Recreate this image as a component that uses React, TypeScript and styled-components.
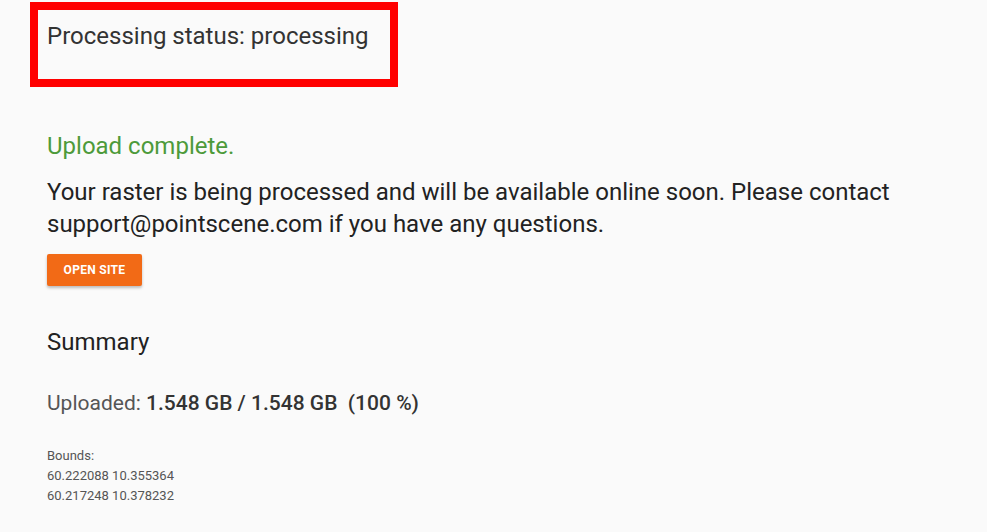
import React from "react";
import styled, { createGlobalStyle } from "styled-components";

const Global = createGlobalStyle`
  html, body { margin: 0; padding: 0; background: #fafafa; }
  body { font-family: Roboto, "Noto Sans", sans-serif; }
`;

const Page = styled.div`
  width: 987px;
  height: 532px;
  background: #fafafa;
  padding: 2px 0 0 30px;
  box-sizing: border-box;
  overflow: hidden;
`;

const StatusBox = styled.div`
  width: 368px;
  height: 85px;
  box-sizing: border-box;
  border: 8px solid #ff0000;
  padding: 11px 0 0 9px;
`;

const StatusText = styled.div`
  font-size: 24px;
  line-height: 30px;
  color: #333;
`;

const Content = styled.div`
  padding: 44px 0 0 17px;
`;

const Success = styled.div`
  font-size: 24px;
  line-height: 30px;
  color: #4d9a3a;
`;

const Message = styled.p`
  margin: 15px 0 0;
  font-size: 24px;
  line-height: 32px;
  color: #222;
`;

const Button = styled.button`
  display: block;
  margin-top: 14px;
  width: 95px;
  height: 32px;
  padding: 0;
  border: none;
  border-radius: 2px;
  background: #f26a16;
  color: #fff;
  font-family: Roboto, sans-serif;
  font-weight: 700;
  font-size: 12px;
  letter-spacing: 0.3px;
  text-transform: uppercase;
  box-shadow: 0 2px 3px rgba(0, 0, 0, 0.25);
  cursor: pointer;
`;

const Heading = styled.h2`
  margin: 41px 0 0;
  font-weight: 400;
  font-size: 24px;
  line-height: 30px;
  color: #222;
`;

const Uploaded = styled.div`
  margin-top: 34px;
  font-size: 21px;
  line-height: 24px;
  color: #555;
`;

const Strong = styled.span`
  font-weight: 500;
  color: #333;
`;

const Bounds = styled.div`
  margin-top: 31px;
  font-size: 13px;
  line-height: 20px;
  color: #555;
`;

export default function App() {
  return (
    <>
      <Global />
      <Page>
        <StatusBox>
          <StatusText>Processing status: processing</StatusText>
        </StatusBox>
        <Content>
          <Success>Upload complete.</Success>
          <Message>
            Your raster is being processed and will be available online soon. Please contact
            <br />
            support@pointscene.com if you have any questions.
          </Message>
          <Button>Open site</Button>
          <Heading>Summary</Heading>
          <Uploaded>
            Uploaded: <Strong>1.548 GB / 1.548 GB &nbsp;(100 %)</Strong>
          </Uploaded>
          <Bounds>
            Bounds:
            <br />
            60.222088 10.355364
            <br />
            60.217248 10.378232
          </Bounds>
        </Content>
      </Page>
    </>
  );
}
